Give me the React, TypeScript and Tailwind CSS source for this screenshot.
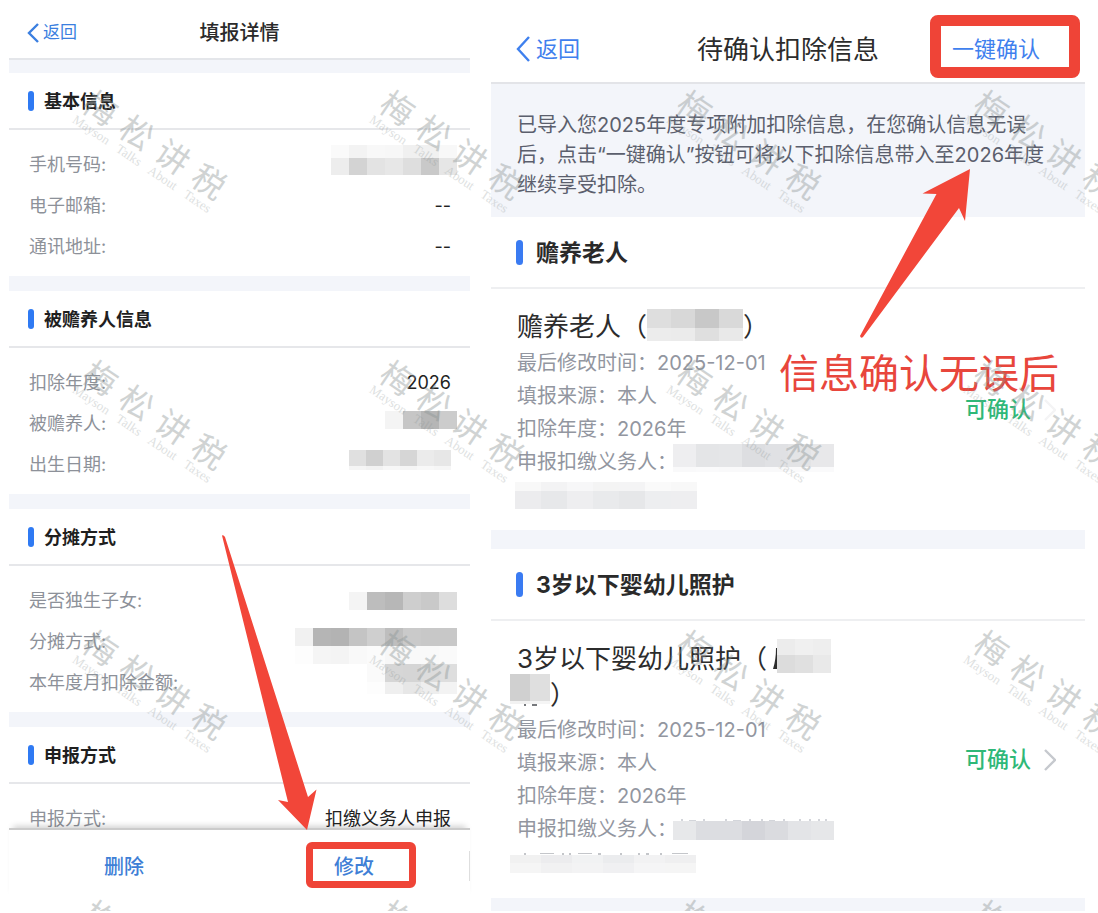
import type { ReactNode } from "react";
import clsx from "clsx";

type MosaicRow = { size: string; cells: string[] };

function Mosaic({ rows, className }: { rows: MosaicRow[]; className?: string }) {
  return (
    <span aria-hidden="true" className={clsx("flex shrink-0 flex-col self-start", className)}>
      {rows.map((row, i) => (
        <span key={i} className="flex">
          {row.cells.map((cell, j) => (
            <span key={j} className={clsx("block", row.size, cell)} />
          ))}
        </span>
      ))}
    </span>
  );
}

function Chevron({ className, points, box }: { className?: string; points: string; box: string }) {
  return (
    <svg aria-hidden="true" viewBox={box} fill="none" stroke="currentColor" strokeWidth="2.4" className={className}>
      <polyline points={points} />
    </svg>
  );
}

function Band({ className }: { className: string }) {
  return <div className={clsx("bg-[#f3f5fa]", className)} />;
}

/* ---------- detail screen ---------- */

function DetailSection({ title, children, clipped }: { title: string; children: ReactNode; clipped?: boolean }) {
  return (
    <section>
      <div className="flex h-[57px] items-center gap-2.5 border-b-2 border-[#e6e7ea] pl-[19px]">
        <span className="h-5 w-1.5 rounded-full bg-[#2f7af3]" />
        <h2 className="pt-0.5 text-[18px] font-bold text-[#1f1f1f]">{title}</h2>
      </div>
      <div className={clsx("flex flex-col gap-px pt-3.5", clipped ? "h-11 overflow-hidden" : "pb-2.5")}>
        {children}
      </div>
    </section>
  );
}

function DetailRow({ label, children }: { label: string; children: ReactNode }) {
  return (
    <div className="flex h-10 shrink-0 items-center justify-between pr-[19px] pl-5 text-[18px]">
      <span className="text-[#8d9199]">{label}</span>
      {children}
    </div>
  );
}

function Value({ children }: { children: ReactNode }) {
  return <span className="text-[#222222]">{children}</span>;
}

function DetailScreen() {
  return (
    <main className="relative min-w-0 flex-[461]">
      <header className="grid h-[60px] grid-cols-[1fr_auto_1fr] items-center border-b-2 border-[#e4e6ea] pt-2">
        <button type="button" className="flex items-center gap-1 pl-[18px] text-[17px] text-[#3b7fe0]">
          <Chevron box="0 0 12 20" points="11,1 2,10 11,19" className="h-5 w-3" />
          返回
        </button>
        <h1 className="text-[20px] font-medium text-[#2a2a2a]">填报详情</h1>
      </header>
      <Band className="h-[13px]" />

      <DetailSection title="基本信息">
        <DetailRow label="手机号码:">
          <Mosaic
            className="-mr-1.5 mt-px"
            rows={[
              { size: "h-[13px] w-[18px]", cells: ["bg-[#fafafa]", "bg-[#f3f3f3]", "bg-[#f8f8f8]", "bg-[#f7f7f7]", "bg-[#f0f0f0]", "bg-[#f1f1f1]", "bg-[#f8f8f8]"] },
              { size: "h-[17px] w-[18px]", cells: ["bg-[#ededed]", "bg-[#d3d3d3]", "bg-[#e3e3e3]", "bg-[#e7e7e7]", "bg-[#dedede]", "bg-[#c9c9c9]", "bg-[#e6e6e6]"] },
            ]}
          />
        </DetailRow>
        <DetailRow label="电子邮箱:">
          <Value>--</Value>
        </DetailRow>
        <DetailRow label="通讯地址:">
          <Value>--</Value>
        </DetailRow>
      </DetailSection>
      <Band className="h-[15px]" />

      <DetailSection title="被赡养人信息">
        <DetailRow label="扣除年度:">
          <Value>2026</Value>
        </DetailRow>
        <DetailRow label="被赡养人:">
          <Mosaic
            className="-mr-1.5 mt-2"
            rows={[{ size: "h-[18px] w-[18px]", cells: ["bg-[#f4f4f4]", "bg-[#c6c6c6]", "bg-[#b6b6b6]", "bg-[#cccccc]"] }]}
          />
        </DetailRow>
        <DetailRow label="出生日期:">
          <Mosaic
            className="mt-1.5"
            rows={[
              { size: "h-4 w-[17px]", cells: ["bg-[#e0e0e0]", "bg-[#d0d0d0]", "bg-[#e3e3e3]", "bg-[#d6d6d6]", "bg-[#ebebeb]", "bg-[#e7e7e7]"] },
              { size: "h-1 w-[17px]", cells: ["bg-[#f5f5f5]", "bg-[#f2f2f2]", "bg-[#f7f7f7]", "bg-[#f5f5f5]", "bg-[#f8f8f8]", "bg-[#f6f6f6]"] },
            ]}
          />
        </DetailRow>
      </DetailSection>
      <Band className="h-[15px]" />

      <DetailSection title="分摊方式">
        <DetailRow label="是否独生子女:">
          <Mosaic
            className="-mr-1.5 mt-3"
            rows={[{ size: "h-[18px] w-[18px]", cells: ["bg-[#f4f4f4]", "bg-[#bdbdbd]", "bg-[#b7b7b7]", "bg-[#cecece]", "bg-[#c9c9c9]", "bg-[#dddddd]"] }]}
          />
        </DetailRow>
        <DetailRow label="分摊方式:">
          <Mosaic
            className="-mr-1.5 mt-[7px]"
            rows={[
              { size: "h-[18px] w-[18px]", cells: ["bg-[#f1f1f1]", "bg-[#b5b5b5]", "bg-[#b3b3b3]", "bg-[#c4c4c4]", "bg-[#cfcfcf]", "bg-[#bebebe]", "bg-[#cacaca]", "bg-[#c8c8c8]", "bg-[#c8c8c8]"] },
              { size: "h-[18px] w-[18px]", cells: ["bg-[#fdfdfd]", "bg-[#f5f5f5]", "bg-[#f4f4f4]", "bg-[#f9f9f9]", "bg-[#fbfbfb]", "bg-[#f7f7f7]", "bg-[#f9f9f9]", "bg-[#f9f9f9]", "bg-[#fafafa]"] },
            ]}
          />
        </DetailRow>
        <DetailRow label="本年度月扣除金额:">
          <Mosaic
            className="-mr-1.5 mt-0.5"
            rows={[
              { size: "h-[18px] w-[18px]", cells: ["bg-[#fafafa]", "bg-[#d6d6d6]", "bg-[#d5d5d5]", "bg-[#dcdcdc]", "bg-[#dedede]"] },
              { size: "h-3 w-[18px]", cells: ["bg-[#fdfdfd]", "bg-[#efefef]", "bg-[#e7e7e7]", "bg-[#eeeeee]", "bg-[#f3f3f3]"] },
            ]}
          />
        </DetailRow>
      </DetailSection>
      <Band className="h-[15px]" />

      <DetailSection title="申报方式" clipped>
        <DetailRow label="申报方式:">
          <Value>扣缴义务人申报</Value>
        </DetailRow>
      </DetailSection>

      <footer className="relative flex items-center border-t-2 border-[#cbcbcb] bg-white text-[20px] font-medium text-[#3f7fd6] shadow-[0_-6px_6px_-4px_rgba(0,0,0,0.18)]">
        <button type="button" className="h-[72px] flex-1 pt-0.5">
          删除
        </button>
        <button type="button" className="relative h-[72px] flex-1 pt-0.5">
          修改
          <span className="absolute top-3 left-[calc(50%-48px)] h-[46px] w-[110px] rounded-md border-[7px] border-[#ef4437]" />
        </button>
        <span className="h-[30px] w-px bg-[#dedede]" />
      </footer>

      <svg aria-hidden="true" viewBox="0 0 100 300" className="absolute top-[532px] left-[210px] h-[300px] w-[100px]" fill="#f24639">
        <path d="M3 3.5 Q4.500 2.500 6 5 L89 265 L97.500 257.500 L88 298 L59 268 L69 270 Z" />
      </svg>
    </main>
  );
}

/* ---------- confirmation screen ---------- */

function ConfirmSection({ title, fade, children }: { title: string; fade?: boolean; children: ReactNode }) {
  return (
    <section>
      <div className="flex h-[72px] items-center gap-[13px] border-b-2 border-[#eeeff1] pl-[25px]">
        <span className="h-[25px] w-[7px] rounded-full bg-[#3a7bf2]" />
        <h2 className="pt-[3px] text-[23px] font-bold text-[#2a2a2a]">{title}</h2>
      </div>
      <div className="flex items-center justify-between pt-[18px] pr-[29px] pb-5 pl-[26px]">
        <div>{children}</div>
        <button type="button" className="flex items-center gap-[13px] pt-0.5 text-[22px] font-medium text-[#2fb878]">
          可确认
          <Chevron
            box="0 0 12 22"
            points="1,1 11,11 1,21"
            className={clsx("h-[22px] w-3", fade ? "text-[#f4f4f5]" : "text-[#c6c9ce]")}
          />
        </button>
      </div>
    </section>
  );
}

function Facts({ mosaic }: { mosaic: ReactNode }) {
  return (
    <div className="pt-0.5 text-[20px] leading-[33px] text-[#9296a0]">
      <p>最后修改时间：2025-12-01</p>
      <p>填报来源：本人</p>
      <p>扣除年度：2026年</p>
      <div className="flex">
        <span>申报扣缴义务人：</span>
        {mosaic}
      </div>
    </div>
  );
}

function ConfirmScreen() {
  return (
    <main className="relative min-w-0 flex-[594]">
      <header className="grid h-[84px] grid-cols-[1fr_auto_1fr] items-center border-b-2 border-[#e3e4e8] pt-4 text-[22px] text-[#3f80ee]">
        <button type="button" className="flex items-center gap-1.5 pl-[25px]">
          <Chevron box="0 0 14 26" points="13,1 2,13 13,25" className="h-[26px] w-3.5" />
          返回
        </button>
        <h1 className="text-[26px] text-[#2c2c2c]">待确认扣除信息</h1>
        <button type="button" className="relative mr-[45px] justify-self-end">
          一键确认
          <span className="absolute -top-[18px] -left-[22px] h-[63px] w-[150px] rounded-lg border-[11px] border-[#ef4437]" />
        </button>
      </header>

      <p className="bg-[#f3f5fa] pt-[26px] pb-[17px] pl-[26px] text-[20px] leading-[30px] whitespace-nowrap text-[#5b5f6d]">
        已导入您2025年度专项附加扣除信息，在您确认信息无误
        <br />
        后，点击“一键确认”按钮可将以下扣除信息带入至2026年度
        <br />
        继续享受扣除。
      </p>

      <ConfirmSection title="赡养老人" fade>
        <h3 className="flex h-[38px] items-center text-[26px] text-[#2c2c2c]">
          赡养老人（
          <Mosaic
            className="mt-0.5"
            rows={[
              { size: "h-[19px] w-6", cells: ["bg-[#dedede]", "bg-[#d8d8d8]", "bg-[#c8c8c8]", "bg-[#d9d9d9]"] },
              { size: "h-[13px] w-6", cells: ["bg-[#ececec]", "bg-[#ebebeb]", "bg-[#dfdfdf]", "bg-[#e9e9e9]"] },
            ]}
          />
          ）
        </h3>
        <Facts
          mosaic={
            <Mosaic
              className="-mt-0.5 -ml-1"
              rows={[
                { size: "h-[23px] w-[23px]", cells: ["bg-[#eeeef0]", "bg-[#e4e5e7]", "bg-[#e5e6e8]", "bg-[#dddee1]", "bg-[#e0e1e4]", "bg-[#e3e4e6]", "bg-[#e8e8ea]"] },
                { size: "h-[5px] w-[23px]", cells: ["bg-[#f9f9fa]", "bg-[#fafafb]", "bg-[#f9f9fa]", "bg-[#f9f9fa]", "bg-[#f9f9fa]", "bg-[#fafafb]", "bg-[#fafafb]"] },
              ]}
            />
          }
        />
        <div className="flex h-[31px]">
          <Mosaic
            className="-ml-0.5 mt-[3px]"
            rows={[
              { size: "h-[9px] w-[26px]", cells: ["bg-[#f8f8f8]", "bg-[#f3f3f4]", "bg-[#f7f7f8]", "bg-[#f4f4f4]", "bg-[#f4f4f5]", "bg-[#fafafa]", "bg-[#f8f8f8]"] },
              { size: "h-[18px] w-[26px]", cells: ["bg-[#ececee]", "bg-[#e7e8ea]", "bg-[#eeeef0]", "bg-[#e9eaec]", "bg-[#e6e7e9]", "bg-[#edeef0]", "bg-[#eeeef0]"] },
            ]}
          />
        </div>
      </ConfirmSection>
      <Band className="h-[19px]" />

      <ConfirmSection title="3岁以下婴幼儿照护">
        <h3 className="text-[26px] text-[#2c2c2c]">
          <span className="flex h-[38px] items-center">
            3岁以下婴幼儿照护（
            <svg aria-hidden="true" viewBox="0 0 4 24" className="ml-1.5 h-6 w-1" fill="currentColor">
              <path d="M3 2 H4 V23 H0 Q3 14 3 2Z" />
            </svg>
            <Mosaic
              rows={[
                { size: "h-4 w-[18px]", cells: ["bg-[#ececec]", "bg-[#f0f0f0]", "bg-[#eeeeee]"] },
                { size: "h-[18px] w-[18px]", cells: ["bg-[#dcdcdc]", "bg-[#e0e0e0]", "bg-[#e9e9e9]"] },
              ]}
            />
          </span>
          <span className="flex h-[35px] items-center">
            <span aria-hidden="true" className="-ml-[7px] flex flex-col self-start">
              <Mosaic
                className="-mt-[3px]"
                rows={[
                  { size: "h-[27px] w-5", cells: ["bg-[#d0d0d0]", "bg-[#dfdfdf]"] },
                  { size: "h-[3px] w-5", cells: ["bg-[#f2f2f2]", "bg-[#f5f5f5]"] },
                ]}
              />
              <svg viewBox="0 0 40 3" className="h-[3px] w-10" fill="#77797d">
                <path d="M14 0h2v2h-2z M22 0h5v2h-5z" />
              </svg>
            </span>
            ）
          </span>
        </h3>
        <Facts
          mosaic={
            <span aria-hidden="true" className="-ml-1 flex flex-col pt-1.5">
              <svg viewBox="0 0 164 2" className="h-0.5 w-[164px]" fill="#d3d5da">
                <path d="M8 0h2v2h-2z M16 1h7v1h-7z M30 0h2v2h-2z M52 0h2v2h-2z M60 1h8v1h-8z M76 0h2v2h-2z M88 0h2v2h-2z M96 1h6v1h-6z M110 0h2v2h-2z M126 0h2v2h-2z M136 0h2v2h-2z M145 0h2v2h-2z M152 0h2v2h-2z" />
              </svg>
              <Mosaic
                rows={[
                  { size: "h-[19px] w-[23px]", cells: ["bg-[#e7e8ea]", "bg-[#dcdde1]", "bg-[#dcdde1]", "bg-[#d4d5da]", "bg-[#dadbdf]", "bg-[#e3e4e7]", "bg-[#e6e7e9]"] },
                ]}
              />
            </span>
          }
        />
        <div aria-hidden="true" className="-ml-[7px] flex h-8 flex-col pt-[7px]">
          <svg viewBox="0 0 186 2" className="h-0.5 w-[186px]" fill="#c4c6ca">
            <path d="M14 0h2v2h-2z M30 0h14v1h-14z M52 0h2v2h-2z M59 0h2v2h-2z M68 0h14v1h-14z M88 0h3v2h-3z M110 0h2v2h-2z M128 0h2v2h-2z M136 0h3v2h-3z M150 0h2v2h-2z M162 0h16v1h-16z" />
          </svg>
          <Mosaic
            rows={[
              { size: "h-2 w-[31px]", cells: ["bg-[#f1f1f1]", "bg-[#ececee]", "bg-[#f1f2f3]", "bg-[#ebecee]", "bg-[#f2f2f3]", "bg-[#efeff0]"] },
              { size: "h-2.5 w-[31px]", cells: ["bg-[#f5f5f5]", "bg-[#f1f1f2]", "bg-[#f3f3f4]", "bg-[#f0f0f2]", "bg-[#f5f5f6]", "bg-[#f5f5f5]"] },
            ]}
          />
        </div>
      </ConfirmSection>
      <Band className="h-[13px]" />

      <svg aria-hidden="true" viewBox="0 0 120 180" className="absolute top-[163px] right-[110px] h-[180px] w-[120px]" fill="#f24639">
        <path d="M115 6 L110 58 L104 45 L8 174 Q6 176 5 173 L81.500 31 L67.500 30.500 Z" />
      </svg>
      <p className="absolute top-[344px] right-[26px] text-[40px] leading-[60px] whitespace-nowrap text-[#e8463c]">信息确认无误后</p>
    </main>
  );
}

/* ---------- watermark ---------- */

const COLUMNS = [0, 1, 2, 3];
const ROWS = [0, 1, 2, 3];

function Watermarks() {
  return (
    <div aria-hidden="true" className="pointer-events-none absolute inset-0 overflow-hidden">
      {ROWS.map((r) =>
        COLUMNS.map((c) => (
          <div
            key={`${r}-${c}`}
            className="absolute w-[164px] rotate-[34deg] text-[#8b9494] opacity-40"
            style={{ left: 69 + c * 297, top: 128 + r * 270 }}
          >
            <div className="flex justify-between text-[33px] leading-[33px]">
              {["梅", "松", "讲", "税"].map((ch) => (
                <span key={ch}>{ch}</span>
              ))}
            </div>
            <div className="flex justify-between font-['Liberation_Serif',serif] text-[13px] leading-[12px] opacity-70">
              {["Mayson", "Talks", "About", "Taxes"].map((w) => (
                <span key={w}>{w}</span>
              ))}
            </div>
          </div>
        )),
      )}
    </div>
  );
}

export default function App() {
  return (
    <div className="bg-white font-['Inter','Noto_Sans_CJK_SC',sans-serif]" lang="zh-CN">
      <div className="relative flex items-start gap-[21px] overflow-hidden pr-[13px] pl-[9px]">
        <DetailScreen />
        <ConfirmScreen />
        <Watermarks />
      </div>
    </div>
  );
}
